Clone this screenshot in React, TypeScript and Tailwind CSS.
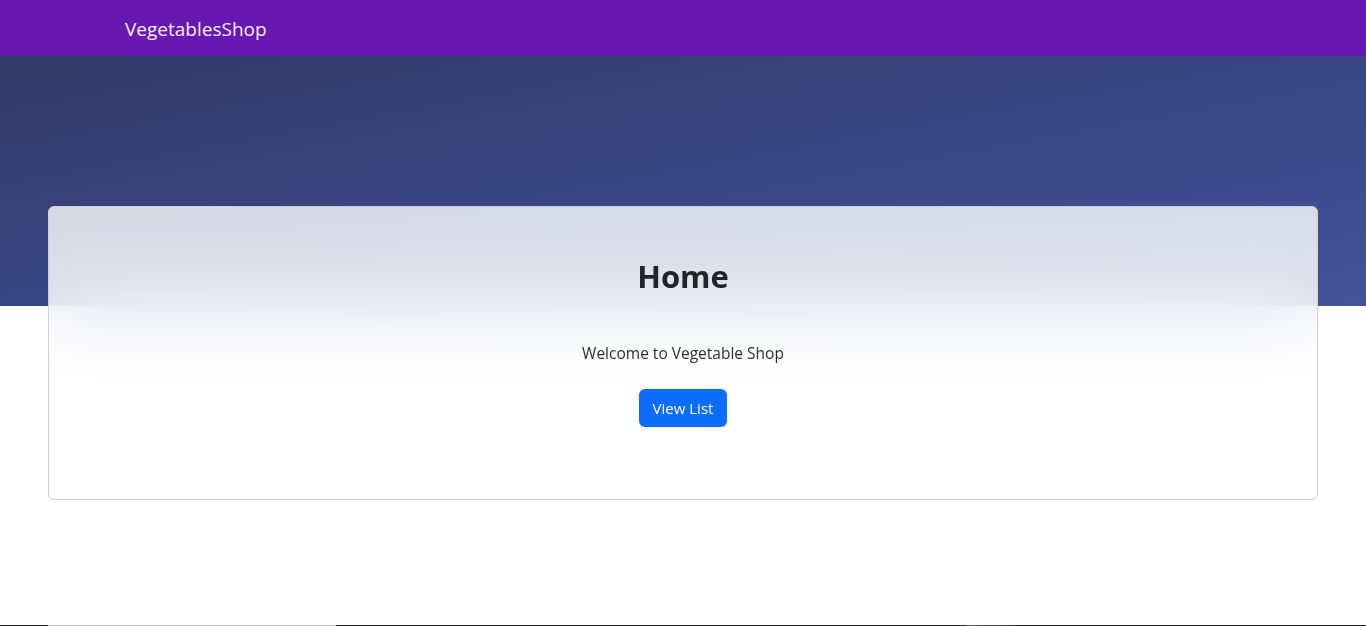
import React from "react";

export default function App() {
  const font = { fontFamily: '"Segoe UI", "Open Sans", "Noto Sans", sans-serif' };
  return (
    <div className="relative h-[626px] w-full overflow-hidden bg-white flex flex-col" style={font}>
      <nav className="h-[56px] shrink-0 bg-[#6718b2] flex items-center pl-[125px] pt-[2px]">
        <span className="text-[19px] text-[#f7eeff]">VegetablesShop</span>
      </nav>
      <div className="h-[250px] shrink-0 bg-gradient-to-br from-[#343a66] via-[#394684] to-[#435398]" />
      <div className="flex-1" />
      <div className="absolute left-[48px] right-[48px] top-[206px] h-[294px] rounded-md border border-[#cfcfd4] bg-white/80 backdrop-blur-2xl flex flex-col items-center pt-[50px]">
        <h2 className="text-[31px] leading-[38px] font-bold text-[#212529]">Home</h2>
        <p className="mt-[46px] text-[15.5px] leading-[24px] text-[#2b2f33]">Welcome to Vegetable Shop</p>
        <button className="mt-[24px] h-[38px] w-[88px] rounded-md bg-[#0d6efd] text-white text-[15px]">View List</button>
      </div>
      <div className="h-px shrink-0 flex">
        <div className="w-[48px] bg-[#222]" />
        <div className="w-[288px] bg-[#c8c8c8]" />
        <div className="w-[630px] bg-[#222]" />
        <div className="w-[46px] bg-gradient-to-r from-[#666] to-[#333]" />
        <div className="flex-1 bg-[#222]" />
      </div>
    </div>
  );
}
